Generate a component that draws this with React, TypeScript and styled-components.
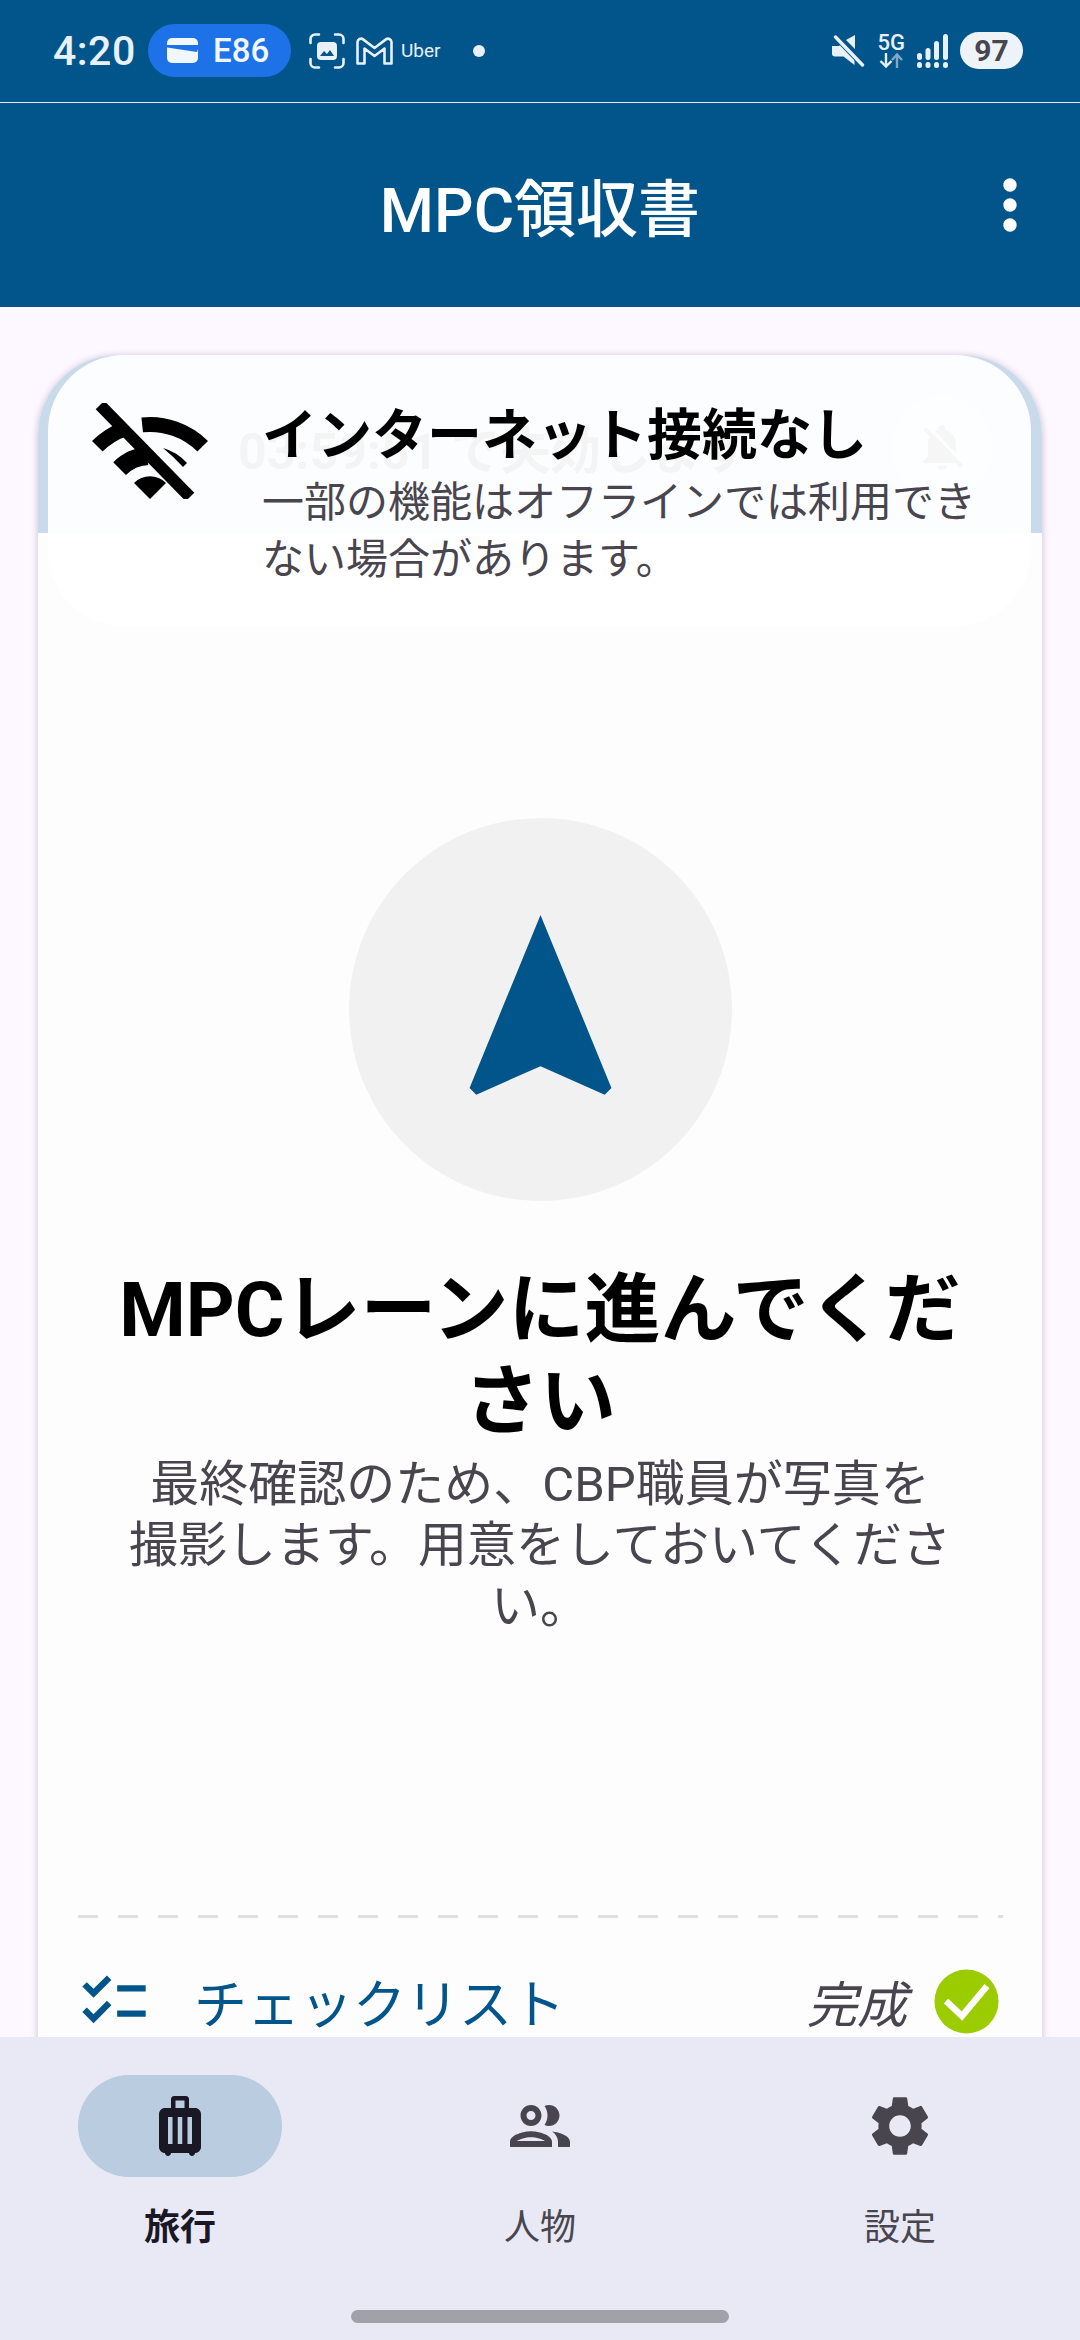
import { MdChecklist, MdLuggage, MdMoreVert, MdNavigation, MdNotificationsOff, MdOutlineGroup, MdSettings } from 'react-icons/md';
import styled, { createGlobalStyle } from 'styled-components';

const GlobalStyle = createGlobalStyle`
  html, body {
    margin: 0;
    padding: 0;
    background: #fdf7ff;
  }
  * {
    box-sizing: border-box;
  }
  body {
    font-family: Roboto, 'Noto Sans CJK JP', sans-serif;
  }
`;

const FaceScanIcon = () => (
  <svg width='36' height='36' viewBox='0 0 36 36' fill='none'>
    <path
      d='M1.5 10V6a4.5 4.5 0 0 1 4.5-4.5h4M26 1.5h4A4.5 4.5 0 0 1 34.5 6v4M34.5 26v4a4.5 4.5 0 0 1-4.5 4.5h-4M10 34.5H6A4.5 4.5 0 0 1 1.5 30v-4'
      stroke='#e8f0f8'
      strokeWidth='2.6'
      strokeLinecap='round'
    />
    <rect x='8' y='9' width='20' height='18' rx='4' fill='#e8f0f8' />
    <path d='M11 23l4-5 3 3 3-4 4 6z' fill='#01558b' />
  </svg>
);

const GmailIcon = () => (
  <svg width='37' height='28' viewBox='0 0 37 28' fill='none'>
    <path
      d='M1.5 5a3.5 3.5 0 0 1 5.6-2.6L18.5 11 29.9 2.4A3.5 3.5 0 0 1 35.5 5v21.5h-7V11.5l-10 7.5-10-7.5v15h-7z'
      stroke='#e8f0f8'
      strokeWidth='2.6'
      strokeLinejoin='round'
    />
  </svg>
);

const WalletIcon = () => (
  <svg width='31' height='25' viewBox='0 0 31 25'>
    <rect width='31' height='25' rx='5' fill='#f2f7fe' />
    <path d='M0 7h31v3.5L30 14 0 9.5z' fill='#1d72e8' />
  </svg>
);

const MuteIcon = () => (
  <svg width='33' height='32' viewBox='0 0 33 32'>
    <path d='M0 11h7l3.5-3 12 13V30l-11-8.5H3a3 3 0 0 1-3-3z M14 5l9-5v14z' fill='#e8f0f8' />
    <path d='M4 2l27 28' stroke='#01558b' strokeWidth='6' />
    <path d='M3.5 2l27 28' stroke='#e8f0f8' strokeWidth='3.4' strokeLinecap='round' />
  </svg>
);

const TransferIcon = () => (
  <svg width='24' height='15' viewBox='0 0 24 15' fill='none' strokeWidth='2.4'>
    <path d='M7 0v13M1.5 8l5.5 5.5L12.5 8' stroke='#e8f0f8' />
    <path d='M18 15V2M13 7l5-5.5L23 7' stroke='#7fa8c6' />
  </svg>
);

const SignalIcon = () => (
  <svg width='31' height='34' viewBox='0 0 31 34' fill='#e8f0f8'>
    <rect x='0' y='19' width='5' height='7' rx='2.5' />
    <rect x='8.5' y='14' width='5' height='12' rx='2.5' />
    <rect x='17' y='7' width='5' height='19' rx='2.5' />
    <rect x='26' y='0' width='5' height='26' rx='2.5' />
    <rect x='0' y='28' width='5' height='6' rx='2.5' />
    <rect x='8.5' y='28' width='5' height='6' rx='2.5' />
    <rect x='17' y='28' width='5' height='6' rx='2.5' />
    <rect x='26' y='28' width='5' height='6' rx='2.5' />
  </svg>
);

const WifiOffIcon = () => (
  <svg width='116' height='96' viewBox='0 0 116 96' fill='none'>
    <path d='M5.3 43.3A74.5 74.5 0 0 1 32.5 26' stroke='#000' strokeWidth='15' />
    <path d='M50.2 21.9A74.5 74.5 0 0 1 110.7 43.3' stroke='#000' strokeWidth='15' />
    <path d='M27.6 65.6A43 43 0 0 1 55.7 53' stroke='#000' strokeWidth='18' />
    <path d='M71 45Q85 49 95 60L91 64Q82 54 71 45z' fill='#000' />
    <path d='M42 80A22.6 22.6 0 0 1 74 80L58 96z' fill='#000' />
    <path d='M8 2l90 92' stroke='#000' strokeWidth='12' />
  </svg>
);

const DoneIcon = () => (
  <svg width='65' height='65' viewBox='0 0 65 65' fill='none'>
    <circle cx='32.5' cy='32.5' r='32' fill='#9bcc00' />
    <path d='M12 32l16 15L53 17' stroke='#fff' strokeWidth='6.5' />
  </svg>
);

const App = () => {
  return (
    <>
      <GlobalStyle />
      <Page>
        <StatusBar>
          <Clock>4:20</Clock>
          <CallPill>
            <WalletIcon />
            <span>E86</span>
          </CallPill>
          <NotifyIcons>
            <FaceScanIcon />
            <GmailIcon />
            <UberLabel>Uber</UberLabel>
            <StatusDot />
          </NotifyIcons>
          <SystemIcons>
            <MuteIcon />
            <NetworkStack>
              <NetworkLabel>5G</NetworkLabel>
              <TransferIcon />
            </NetworkStack>
            <SignalIcon />
            <Battery>97</Battery>
          </SystemIcons>
        </StatusBar>

        <AppHeader>
          <span />
          <AppTitle>MPC領収書</AppTitle>
          <MenuButton>
            <MdMoreVert size={80} />
          </MenuButton>
        </AppHeader>

        <Main>
          <Card>
            <TimerBand>
              <TimerText>03:59:51 で失効します</TimerText>
              <BellCircle>
                <MdNotificationsOff size={56} />
              </BellCircle>
            </TimerBand>

            <Notice>
              <WifiOffIcon />
              <NoticeBody>
                <NoticeTitle>インターネット接続なし</NoticeTitle>
                <NoticeText>
                  一部の機能はオフラインでは利用でき
                  <br />
                  ない場合があります。
                </NoticeText>
              </NoticeBody>
            </Notice>

            <ArrowCircle>
              <MdNavigation size={227} />
            </ArrowCircle>
            <Heading>
              MPCレーンに進んでくだ
              <br />
              さい
            </Heading>
            <Description>
              最終確認のため、CBP職員が写真を
              <br />
              撮影します。用意をしておいてくださ
              <br />
              い。
            </Description>

            <DashedLine />

            <ChecklistRow>
              <ChecklistIcon>
                <MdChecklist size={76} />
              </ChecklistIcon>
              <ChecklistLabel>チェックリスト</ChecklistLabel>
              <DoneLabel>完成</DoneLabel>
              <DoneIcon />
            </ChecklistRow>
          </Card>
        </Main>

        <BottomNav>
          <Tabs>
            <Tab>
              <TabIcon $active>
                <MdLuggage size={72} />
              </TabIcon>
              <TabLabel $active>旅行</TabLabel>
            </Tab>
            <Tab>
              <TabIcon>
                <MdOutlineGroup size={72} />
              </TabIcon>
              <TabLabel>人物</TabLabel>
            </Tab>
            <Tab>
              <TabIcon>
                <MdSettings size={72} />
              </TabIcon>
              <TabLabel>設定</TabLabel>
            </Tab>
          </Tabs>
          <HomeBar />
        </BottomNav>
      </Page>
    </>
  );
};

export default App;

const Page = styled.div`
  display: flex;
  flex-direction: column;
  width: 1080px;
  height: 2340px;
  overflow: hidden;
  background: #fdf7ff;
`;

const StatusBar = styled.div`
  display: flex;
  align-items: center;
  flex-shrink: 0;
  height: 103px;
  padding: 7px 57px 8px 53px;
  background: #01558b;
  border-bottom: 1px solid #dfe9f1;
  color: #e8f0f8;
`;

const Clock = styled.div`
  width: 95px;
  font-size: 41px;
  font-weight: 500;
  letter-spacing: 0.5px;
`;

const CallPill = styled.div`
  display: flex;
  align-items: center;
  gap: 15px;
  width: 143px;
  height: 53px;
  padding-left: 19px;
  border-radius: 27px;
  background: #1d72e8;
  color: #f2f7fe;
  font-size: 33px;
  font-weight: 500;
`;

const NotifyIcons = styled.div`
  display: flex;
  align-items: center;
  gap: 11px;
  margin-left: 18px;
`;

const UberLabel = styled.span`
  margin-left: -3px;
  font-size: 19px;
  line-height: 28px;
`;

const StatusDot = styled.span`
  width: 12px;
  height: 12px;
  margin-left: 21px;
  border-radius: 50%;
  background: #e8f0f8;
`;

const SystemIcons = styled.div`
  display: flex;
  align-items: center;
  gap: 12px;
  margin-left: auto;
`;

const NetworkStack = styled.div`
  display: flex;
  flex-direction: column;
  align-items: center;
  margin-left: 1px;
`;

const NetworkLabel = styled.span`
  font-size: 22px;
  font-weight: 500;
  line-height: 20px;
`;

const Battery = styled.div`
  width: 63px;
  height: 37px;
  border-radius: 19px;
  background: #eef3f8;
  color: #49454f;
  font-size: 30px;
  font-weight: 700;
  line-height: 37px;
  text-align: center;
`;

const AppHeader = styled.header`
  display: grid;
  grid-template-columns: 1fr auto 1fr;
  align-items: center;
  flex-shrink: 0;
  height: 204px;
  background: #01558b;
  color: #fff;
`;

const AppTitle = styled.h1`
  margin: 0;
  font-size: 62px;
  font-weight: 500;
`;

const MenuButton = styled.div`
  display: flex;
  justify-self: end;
  padding-right: 30px;
`;

const Main = styled.main`
  flex: 1;
  min-height: 0;
  padding: 48px 38px 0;
  overflow: hidden;
`;

const Card = styled.section`
  position: relative;
  display: flex;
  flex-direction: column;
  align-items: center;
  height: 1800px;
  border-radius: 80px 80px 0 0;
  background: #fdfdfd;
  box-shadow: 0 1px 7px rgba(60, 40, 80, 0.28);
  overflow: hidden;
`;

const TimerBand = styled.div`
  display: flex;
  align-items: center;
  align-self: stretch;
  justify-content: space-between;
  flex-shrink: 0;
  height: 178px;
  padding: 6px 50px 0 200px;
  background: #c9dbeb;
`;

const TimerText = styled.div`
  color: #2b2b2b;
  font-size: 50px;
  font-weight: 700;
  white-space: nowrap;
`;

const BellCircle = styled.div`
  display: flex;
  align-items: center;
  justify-content: center;
  width: 100px;
  height: 100px;
  border-radius: 50%;
  background: #dbe7f1;
  color: #555;
`;

const Notice = styled.div`
  position: absolute;
  top: 0;
  left: 10px;
  right: 11px;
  display: flex;
  align-items: flex-start;
  gap: 54px;
  height: 271px;
  padding: 47px 30px 0 44px;
  border-radius: 0 0 76px 76px;
  border-top-left-radius: 76px;
  border-top-right-radius: 76px;
  background: rgba(255, 255, 255, 0.95);

  svg {
    flex-shrink: 0;
    margin-top: 1px;
  }
`;

const NoticeBody = styled.div`
  display: flex;
  flex-direction: column;
  gap: 6px;
`;

const NoticeTitle = styled.div`
  color: #000;
  font-size: 55px;
  font-weight: 700;
  line-height: 66px;
  white-space: nowrap;
`;

const NoticeText = styled.div`
  color: #49454f;
  font-size: 42px;
  line-height: 57px;
  white-space: nowrap;
`;

const ArrowCircle = styled.div`
  display: flex;
  align-items: center;
  justify-content: center;
  flex-shrink: 0;
  width: 383px;
  height: 383px;
  margin-top: 285px;
  border-radius: 50%;
  background: #f1f1f2;
  color: #01558b;
`;

const Heading = styled.h2`
  margin: 63px 0 0;
  color: #000;
  font-size: 76px;
  font-weight: 700;
  line-height: 92px;
  text-align: center;
  white-space: nowrap;
`;

const Description = styled.p`
  margin: 6px 0 0;
  color: #49454f;
  font-size: 49px;
  line-height: 61px;
  text-align: center;
  white-space: nowrap;
`;

const DashedLine = styled.div`
  flex-shrink: 0;
  width: 925px;
  height: 3px;
  margin-top: 278px;
  background: repeating-linear-gradient(to right, #e0e0e0 0 20px, transparent 20px 40px);
`;

const ChecklistRow = styled.div`
  display: flex;
  align-items: center;
  align-self: stretch;
  flex-shrink: 0;
  height: 66px;
  margin-top: 50px;
  padding: 0 43px 0 38px;
`;

const ChecklistIcon = styled.span`
  display: flex;
  color: #01558b;
`;

const ChecklistLabel = styled.span`
  flex: 1;
  margin-left: 42px;
  color: #01558b;
  font-size: 53px;
`;

const DoneLabel = styled.span`
  margin-right: 27px;
  color: #49454f;
  font-size: 50px;
  font-style: italic;
`;

const BottomNav = styled.nav`
  display: flex;
  flex-direction: column;
  align-items: center;
  flex-shrink: 0;
  height: 303px;
  padding-top: 38px;
  background: #e8e9f4;
`;

const Tabs = styled.div`
  display: grid;
  grid-template-columns: repeat(3, 1fr);
  width: 100%;
`;

const Tab = styled.div`
  display: flex;
  flex-direction: column;
  align-items: center;
  gap: 27px;
`;

const TabIcon = styled.div<{ $active?: boolean }>`
  display: flex;
  align-items: center;
  justify-content: center;
  width: 204px;
  height: 102px;
  border-radius: 51px;
  background: ${({ $active }) => ($active ? '#bacce0' : 'transparent')};
  color: ${({ $active }) => ($active ? '#1b1825' : '#49454f')};
`;

const TabLabel = styled.div<{ $active?: boolean }>`
  color: ${({ $active }) => ($active ? '#1b1825' : '#49454f')};
  font-size: 36px;
  font-weight: ${({ $active }) => ($active ? 700 : 400)};
  line-height: 48px;
`;

const HomeBar = styled.div`
  width: 378px;
  height: 13px;
  margin-top: 58px;
  border-radius: 7px;
  background: #a1a1aa;
`;
